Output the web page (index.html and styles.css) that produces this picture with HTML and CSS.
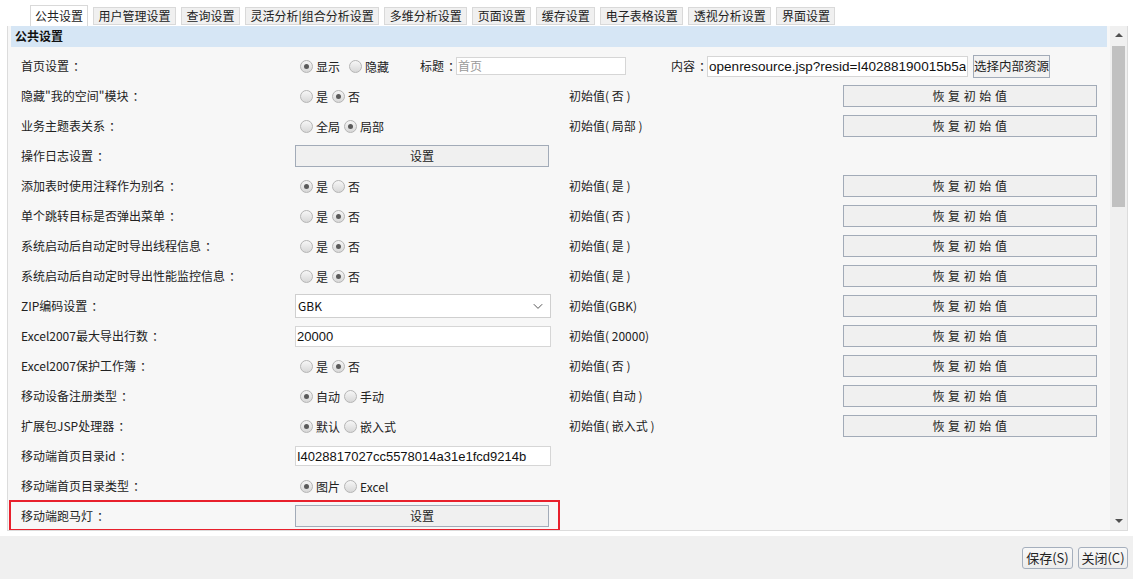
FILE: index.html
```html
<!DOCTYPE html>
<html lang="zh">
<head>
<meta charset="utf-8">
<title>系统设置</title>
<link rel="stylesheet" href="styles.css">
</head>
<body>
<div class="tabs">
  <span class="tab active">公共设置</span>
  <span class="tab">用户管理设置</span>
  <span class="tab">查询设置</span>
  <span class="tab">灵活分析|组合分析设置</span>
  <span class="tab">多维分析设置</span>
  <span class="tab">页面设置</span>
  <span class="tab">缓存设置</span>
  <span class="tab">电子表格设置</span>
  <span class="tab">透视分析设置</span>
  <span class="tab">界面设置</span>
</div>
<div class="panel">
  <div class="content">
    <div class="section">公共设置</div>

    <div class="row">
      <div class="label">首页设置<span class="colon">：</span></div>
      <div class="wide">
        <span class="radios first"><span class="radio on"></span><span class="rt">显示</span><span class="radio"></span><span class="rt">隐藏</span></span>
        <span class="fl title-l">标题<span class="colon">：</span></span><input class="txt title-in" placeholder="首页">
        <span class="fl content-l">内容<span class="colon">：</span></span><input class="txt content-in" value="openresource.jsp?resid=I40288190015b5a9"><button class="btn pick">选择内部资源</button>
      </div>
    </div>

    <div class="row">
      <div class="label">隐藏"我的空间"模块<span class="colon">：</span></div>
      <div class="ctl"><span class="radio"></span><span class="rt">是</span><span class="radio on"></span><span class="rt">否</span></div>
      <div class="init">初始值( 否 )</div>
      <div><button class="btn reset">恢复初始值</button></div>
    </div>

    <div class="row">
      <div class="label">业务主题表关系<span class="colon">：</span></div>
      <div class="ctl"><span class="radio"></span><span class="rt">全局</span><span class="radio on"></span><span class="rt">局部</span></div>
      <div class="init">初始值( 局部 )</div>
      <div><button class="btn reset">恢复初始值</button></div>
    </div>

    <div class="row">
      <div class="label">操作日志设置<span class="colon">：</span></div>
      <div class="ctl"><button class="btn setbtn">设置</button></div>
      <div class="init"></div>
      <div></div>
    </div>

    <div class="row">
      <div class="label">添加表时使用注释作为别名<span class="colon">：</span></div>
      <div class="ctl"><span class="radio on"></span><span class="rt">是</span><span class="radio"></span><span class="rt">否</span></div>
      <div class="init">初始值( 是 )</div>
      <div><button class="btn reset">恢复初始值</button></div>
    </div>

    <div class="row">
      <div class="label">单个跳转目标是否弹出菜单<span class="colon">：</span></div>
      <div class="ctl"><span class="radio"></span><span class="rt">是</span><span class="radio on"></span><span class="rt">否</span></div>
      <div class="init">初始值( 否 )</div>
      <div><button class="btn reset">恢复初始值</button></div>
    </div>

    <div class="row">
      <div class="label">系统启动后自动定时导出线程信息<span class="colon">：</span></div>
      <div class="ctl"><span class="radio"></span><span class="rt">是</span><span class="radio on"></span><span class="rt">否</span></div>
      <div class="init">初始值( 是 )</div>
      <div><button class="btn reset">恢复初始值</button></div>
    </div>

    <div class="row">
      <div class="label">系统启动后自动定时导出性能监控信息<span class="colon">：</span></div>
      <div class="ctl"><span class="radio"></span><span class="rt">是</span><span class="radio on"></span><span class="rt">否</span></div>
      <div class="init">初始值( 是 )</div>
      <div><button class="btn reset">恢复初始值</button></div>
    </div>

    <div class="row">
      <div class="label">ZIP编码设置<span class="colon">：</span></div>
      <div class="ctl"><div class="select"><span>GBK</span><svg width="10" height="7" viewBox="0 0 10 7"><path d="M0.8 1.2 L5 5.4 L9.2 1.2" fill="none" stroke="#555" stroke-width="1"/></svg></div></div>
      <div class="init">初始值(GBK)</div>
      <div><button class="btn reset">恢复初始值</button></div>
    </div>

    <div class="row">
      <div class="label">Excel2007最大导出行数<span class="colon">：</span></div>
      <div class="ctl"><input class="txt full num" value="20000"></div>
      <div class="init">初始值( 20000)</div>
      <div><button class="btn reset">恢复初始值</button></div>
    </div>

    <div class="row">
      <div class="label">Excel2007保护工作簿<span class="colon">：</span></div>
      <div class="ctl"><span class="radio"></span><span class="rt">是</span><span class="radio on"></span><span class="rt">否</span></div>
      <div class="init">初始值( 否 )</div>
      <div><button class="btn reset">恢复初始值</button></div>
    </div>

    <div class="row">
      <div class="label">移动设备注册类型<span class="colon">：</span></div>
      <div class="ctl"><span class="radio on"></span><span class="rt">自动</span><span class="radio"></span><span class="rt">手动</span></div>
      <div class="init">初始值( 自动 )</div>
      <div><button class="btn reset">恢复初始值</button></div>
    </div>

    <div class="row">
      <div class="label">扩展包JSP处理器<span class="colon">：</span></div>
      <div class="ctl"><span class="radio on"></span><span class="rt">默认</span><span class="radio"></span><span class="rt">嵌入式</span></div>
      <div class="init">初始值( 嵌入式 )</div>
      <div><button class="btn reset">恢复初始值</button></div>
    </div>

    <div class="row">
      <div class="label">移动端首页目录id<span class="colon">：</span></div>
      <div class="ctl"><input class="txt full num id" value="I4028817027cc5578014a31e1fcd9214b"></div>
      <div class="init"></div>
      <div></div>
    </div>

    <div class="row">
      <div class="label">移动端首页目录类型<span class="colon">：</span></div>
      <div class="ctl"><span class="radio on"></span><span class="rt">图片</span><span class="radio"></span><span class="rt">Excel</span></div>
      <div class="init"></div>
      <div></div>
    </div>

    <div class="row marked">
      <div class="label">移动端跑马灯<span class="colon">：</span></div>
      <div class="ctl"><button class="btn setbtn">设置</button></div>
    </div>
  </div>
  <div class="scrollbar">
    <span class="arrow up"></span>
    <span class="thumb"></span>
    <span class="arrow down"></span>
  </div>
</div>
<div class="footer">
  <button class="btn foot">保存(S)</button>
  <button class="btn foot">关闭(C)</button>
</div>
</body>
</html>
```

FILE: styles.css
```css
* { box-sizing: border-box; }
html, body { margin: 0; padding: 0; }
body {
  width: 1133px;
  height: 579px;
  overflow: hidden;
  background: #ffffff;
  font-family: "Noto Sans CJK SC", "Liberation Sans", sans-serif;
  font-size: 12px;
  color: #222;
}

.colon {
  display: inline-block;
  padding-left: 4px;
  margin-right: -4px;
}

.tabs {
  height: 26px;
  padding-left: 30px;
  display: flex;
  align-items: flex-end;
  gap: 5px;
}
.tab {
  height: 18px;
  margin-bottom: 1px;
  padding: 0 4.5px;
  border: 1px solid #d9d9d9;
  background: #f0f0f0;
  line-height: 16px;
  white-space: nowrap;
  color: #222;
}
.tab.active {
  height: 21px;
  margin-bottom: 0;
  padding: 0 4px;
  background: #ffffff;
  border-bottom: none;
  line-height: 19px;
}

.panel {
  margin-left: 7px;
  width: 1121px;
  height: 505px;
  border-left: 1px solid #dcdcdc;
  border-right: 1px solid #dcdcdc;
  border-bottom: 1px solid #dcdcdc;
  background: #f7f7f7;
  display: flex;
  overflow: hidden;
}
.content {
  width: 1102px;
  overflow: hidden;
}
.section {
  margin-left: 3px;
  width: 1096px;
  height: 21px;
  margin-bottom: 4px;
  padding-left: 4px;
  background: #d6e6f5;
  font-weight: bold;
  line-height: 20px;
  color: #111;
}

.row {
  height: 30px;
  padding-left: 13px;
  display: grid;
  grid-template-columns: 274px 274px 274px 254px;
  align-items: center;
  white-space: nowrap;
}
.label { line-height: 14px; }
.ctl, .wide {
  display: flex;
  align-items: center;
}
.wide { grid-column: 2 / 5; }
.radios { display: flex; align-items: center; }
.init { line-height: 14px; color: #222; }

.radio {
  width: 13px;
  height: 13px;
  margin-left: 5px;
  border-radius: 50%;
  border: 1px solid #b5b5b5;
  background: linear-gradient(#f6f6f6, #d8d8d8);
  position: relative;
  flex: none;
}
.radio + .rt { margin-left: 3px; }
.rt + .radio { margin-left: 4px; }
.first .rt + .radio { margin-left: 9px; }
.radio.on::after {
  content: "";
  position: absolute;
  left: 3px;
  top: 3px;
  width: 5px;
  height: 5px;
  border-radius: 50%;
  background: #5a5a5a;
}
.rt { line-height: 14px; padding-top: 2px; }

.fl { line-height: 14px; }
.title-l { margin-left: 31px; }
.content-l { margin-left: 45px; }

.txt {
  height: 19px;
  border: 1px solid #d6d6d6;
  background: #fff;
  padding: 0 1px;
  font-family: "Liberation Sans", Arial, sans-serif;
  font-size: 13px;
  color: #111;
  outline: none;
}
.txt::placeholder { color: #9a9a9a; font-family: "Noto Sans CJK SC", sans-serif; font-size: 12px; }
.title-in { width: 170px; height: 18px; }
.content-in { width: 261px; height: 21px; font-size: 13.5px; }
.full { width: 256px; height: 21px; margin-left: 0; }
.id { height: 20px; }

.btn {
  font-family: "Noto Sans CJK SC", "Liberation Sans", sans-serif;
  font-size: 12px;
  color: #222;
  background: #f0f0f0;
  border: 1px solid #a2abb8;
  padding: 0;
  line-height: 14px;
}
.pick {
  margin-left: 5px;
  width: 77px;
  height: 23px;
  font-size: 12.5px;
  background: #f2f2f2;
}
.reset {
  width: 254px;
  height: 22px;
  letter-spacing: 3.6px;
  text-indent: 3px;
}
.setbtn { width: 254px; height: 22px; }

.select {
  width: 256px;
  height: 24px;
  border: 1px solid #cfcfcf;
  background: #fff;
  display: flex;
  align-items: center;
  justify-content: space-between;
  padding: 0 7px 0 2px;
}
.select span { line-height: 14px; color: #111; }

.row.marked {
  margin-left: 1px;
  margin-top: -1px;
  width: 551px;
  height: 31px;
  padding-left: 10px;
  border: 2px solid #e8202c;
  grid-template-columns: 274px 254px;
}

.scrollbar {
  width: 17px;
  background: #f0f0f0;
  position: relative;
}
.thumb {
  position: absolute;
  left: 2px;
  top: 20px;
  width: 13px;
  height: 161px;
  background: #c1c1c1;
}
.arrow {
  position: absolute;
  left: 5px;
  width: 0;
  height: 0;
  border-left: 4px solid transparent;
  border-right: 4px solid transparent;
}
.arrow.up { top: 7px; border-bottom: 4px solid #505050; }
.arrow.down { top: 493px; border-top: 4px solid #505050; }

.footer {
  margin-top: 5px;
  height: 44px;
  background: #f0f0f0;
  display: flex;
  justify-content: flex-end;
  align-items: flex-start;
  gap: 5px;
  padding: 11px 5px 0 0;
}
.foot {
  width: 51px;
  height: 22px;
  border-radius: 3px;
  font-size: 13px;
  background: linear-gradient(#f8f8f8, #ececec);
  border-color: #a5afbd;
}
.foot + .foot { width: 50px; }
```
